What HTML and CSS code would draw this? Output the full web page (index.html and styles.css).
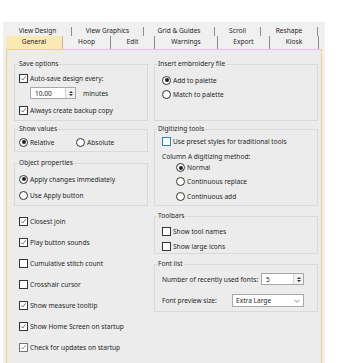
FILE: index.html
```html
<!DOCTYPE html>
<html>
<head>
  <title>Options</title>
  <meta name="viewport" content="width=device-width, initial-scale=1.0">
  <link rel="stylesheet" href="styles.css">
</head>
<body>
  <div class="window">
    <!-- two rows of tabs, the lower one holds the active tab -->
    <div class="tab-row upper">
      <div class="tab t-view-design">View Design</div>
      <div class="tab t-view-graphics">View Graphics</div>
      <div class="tab t-grid">Grid &amp; Guides</div>
      <div class="tab t-scroll">Scroll</div>
      <div class="tab t-reshape">Reshape</div>
    </div>
    <div class="tab-row lower">
      <div class="tab active t-general">General</div>
      <div class="tab t-hoop">Hoop</div>
      <div class="tab t-edit">Edit</div>
      <div class="tab t-warnings">Warnings</div>
      <div class="tab t-export">Export</div>
      <div class="tab t-kiosk">Kiosk</div>
    </div>

    <div class="panel">
      <div class="col left-col">
        <fieldset class="group save-group">
          <legend>Save options</legend>
          <div class="row"><span class="check on"><svg viewBox="0 0 9 9"><polyline points="1.5,4.5 3.4,6.5 7.4,1.6"/></svg></span><span>Auto-save design every:</span></div>
          <div class="row spin-row">
            <div class="spin small-spin"><span class="spin-val">10.00</span><span class="spin-btn"><i class="up"></i><i class="down"></i></span></div>
            <span class="unit">minutes</span>
          </div>
          <div class="row backup-row"><span class="check on"><svg viewBox="0 0 9 9"><polyline points="1.5,4.5 3.4,6.5 7.4,1.6"/></svg></span><span>Always create backup copy</span></div>
        </fieldset>

        <fieldset class="group show-group">
          <legend>Show values</legend>
          <div class="row">
            <span class="radio-item relative"><span class="radio on"></span><span>Relative</span></span>
            <span class="radio-item"><span class="radio"></span><span>Absolute</span></span>
          </div>
        </fieldset>

        <fieldset class="group obj-group">
          <legend>Object properties</legend>
          <div class="row"><span class="radio on"></span><span>Apply changes immediately</span></div>
          <div class="row second"><span class="radio"></span><span>Use Apply button</span></div>
        </fieldset>

        <div class="check-list">
          <div class="row"><span class="check on"><svg viewBox="0 0 9 9"><polyline points="1.5,4.5 3.4,6.5 7.4,1.6"/></svg></span><span>Closest join</span></div>
          <div class="row"><span class="check on"><svg viewBox="0 0 9 9"><polyline points="1.5,4.5 3.4,6.5 7.4,1.6"/></svg></span><span>Play button sounds</span></div>
          <div class="row"><span class="check"></span><span>Cumulative stitch count</span></div>
          <div class="row"><span class="check"></span><span>Crosshair cursor</span></div>
          <div class="row"><span class="check on"><svg viewBox="0 0 9 9"><polyline points="1.5,4.5 3.4,6.5 7.4,1.6"/></svg></span><span>Show measure tooltip</span></div>
          <div class="row"><span class="check on"><svg viewBox="0 0 9 9"><polyline points="1.5,4.5 3.4,6.5 7.4,1.6"/></svg></span><span>Show Home Screen on startup</span></div>
          <div class="row"><span class="check on dim"><svg viewBox="0 0 9 9"><polyline points="1.5,4.5 3.4,6.5 7.4,1.6"/></svg></span><span>Check for updates on startup</span></div>
        </div>
      </div>

      <div class="col right-col">
        <fieldset class="group insert-group">
          <legend>Insert embroidery file</legend>
          <div class="row"><span class="radio on"></span><span>Add to palette</span></div>
          <div class="row second"><span class="radio"></span><span>Match to palette</span></div>
        </fieldset>

        <fieldset class="group digit-group">
          <legend>Digitizing tools</legend>
          <div class="row"><span class="check hover"></span><span>Use preset styles for traditional tools</span></div>
          <div class="row method-label">Column A digitizing method:</div>
          <div class="row indent"><span class="radio on"></span><span>Normal</span></div>
          <div class="row indent replace"><span class="radio"></span><span>Continuous replace</span></div>
          <div class="row indent add"><span class="radio"></span><span>Continuous add</span></div>
        </fieldset>

        <fieldset class="group toolbar-group">
          <legend>Toolbars</legend>
          <div class="row"><span class="check"></span><span>Show tool names</span></div>
          <div class="row second"><span class="check"></span><span>Show large icons</span></div>
        </fieldset>

        <fieldset class="group font-group">
          <legend>Font list</legend>
          <div class="row field-row">
            <span>Number of recently used fonts:</span>
            <div class="spin font-spin"><span class="spin-val">5</span><span class="spin-btn"><i class="up"></i><i class="down"></i></span></div>
          </div>
          <div class="row field-row combo-row">
            <span>Font preview size:</span>
            <div class="combo"><span>Extra Large</span><svg viewBox="0 0 7 4"><polyline points="0.5,0.5 3.5,3.5 6.5,0.5"/></svg></div>
          </div>
        </fieldset>
      </div>
    </div>
  </div>
</body>
</html>
```

FILE: styles.css
```css
body {
  margin: 0;
  background-color: #fff;
  font-family: "Noto Sans", "Open Sans", sans-serif;
  font-size: 6.6px;
  color: #262626;
  overflow: hidden;
}

.window {
  margin: 22px 0 0 3px;
  width: 322px;
  height: 350px;
  background-color: #f0f0f0;
  display: flex;
  flex-direction: column;
  overflow: hidden;
}

/* tabs */
.tab-row {
  display: flex;
}

.tab-row.upper {
  padding: 5px 0 0 1px;
}

.tab-row.lower {
  padding-left: 3px;
}

.tab {
  display: flex;
  align-items: center;
  justify-content: center;
  border-right: 1px solid #8c8c8c;
  box-sizing: border-box;
  line-height: 1;
}

.upper .tab {
  height: 9px;
}

.lower .tab {
  height: 13px;
}

.tab.active {
  background-color: #fce8b2;
  border-right-color: #b9b9b9;
}

.t-view-design { width: 68px; }
.t-view-graphics { width: 72px; }
.t-grid { width: 71px; }
.t-scroll { width: 46px; }
.t-reshape { width: 57px; }

.t-general { width: 57px; }
.t-hoop { width: 48px; }
.t-edit { width: 44px; }
.t-warnings { width: 63px; }
.t-export { width: 52px; }
.t-kiosk { width: 49px; }

/* page body */
.panel {
  flex: 1;
  margin-left: 3px;
  width: 316px;
  box-sizing: border-box;
  border: 1px solid #f1d17c;
  background-color: #ececec;
  padding: 9px 3px 0 7px;
  display: flex;
  gap: 6px;
}

.col {
  display: flex;
  flex-direction: column;
}

.left-col {
  width: 134px;
}

.right-col {
  width: 164px;
}

.group {
  margin: 0;
  border: 1px solid #d9d9d9;
  min-width: 0;
  padding: 0 0 0 4px;
}

.group legend {
  padding: 0 1px;
  margin-left: -1px;
  height: 10px;
  line-height: 10px;
}

.right-col .group {
  padding-left: 7px;
}

.right-col .group legend {
  margin-left: -5px;
}

.row {
  display: flex;
  align-items: center;
  height: 12px;
  gap: 2px;
  white-space: nowrap;
}

/* check boxes and radio buttons */
.check {
  width: 9px;
  height: 9px;
  box-sizing: border-box;
  border: 1px solid #333;
  background-color: #fff;
  flex: none;
  display: flex;
}

.check svg {
  width: 7px;
  height: 7px;
  fill: none;
  stroke: #333;
  stroke-width: 0.9;
}

.check.dim {
  border-color: #777;
}

.check.dim svg {
  stroke: #666;
}

.check.hover {
  border-color: #2f7fd0;
}

.radio {
  width: 9px;
  height: 9px;
  box-sizing: border-box;
  border: 1px solid #333;
  border-radius: 50%;
  background-color: #fff;
  flex: none;
  display: flex;
  align-items: center;
  justify-content: center;
}

.radio.on::after {
  content: "";
  width: 4px;
  height: 4px;
  border-radius: 50%;
  background-color: #222;
}

.radio-item {
  display: flex;
  align-items: center;
  gap: 2px;
}

.radio-item.relative {
  width: 55px;
}

/* spin boxes and combo */
.spin {
  display: flex;
  box-sizing: border-box;
  border: 1px solid #a8a8a8;
  background-color: #fff;
  height: 12px;
}

.spin-val {
  flex: 1;
  display: flex;
  align-items: center;
  padding-left: 4px;
}

.spin-btn {
  width: 9px;
  display: flex;
  flex-direction: column;
  align-items: center;
  justify-content: center;
  gap: 1px;
  border-left: 1px solid #d4d4d4;
  background-color: #f2f2f2;
}

.spin-btn i {
  width: 0;
  height: 0;
  border-left: 2px solid transparent;
  border-right: 2px solid transparent;
}

.spin-btn .up {
  border-bottom: 2px solid #333;
}

.spin-btn .down {
  border-top: 2px solid #333;
}

.small-spin {
  width: 46px;
  margin-left: 11px;
}

.unit {
  margin-left: 5px;
}

.combo {
  width: 72px;
  height: 13px;
  box-sizing: border-box;
  border: 1px solid #a8a8a8;
  background-color: #fff;
  display: flex;
  align-items: center;
  justify-content: space-between;
  padding: 0 3px 0 3px;
}

.combo svg {
  width: 6px;
  height: 4px;
  fill: none;
  stroke: #555;
  stroke-width: 0.8;
}

.font-spin {
  width: 43px;
}

/* vertical rhythm of the left column */
.save-group {
  padding-bottom: 4px;
}

.save-group .row:first-of-type {
  margin-top: 3px;
}

.spin-row {
  margin-top: 3px;
}

.backup-row {
  margin-top: 5px;
}

.show-group {
  margin-top: 3px;
  padding-top: 2px;
  padding-bottom: 3px;
}

.obj-group {
  margin-top: 6px;
  padding-top: 5px;
  padding-bottom: 4px;
}

.obj-group .second {
  margin-top: 4px;
}

.check-list {
  margin-top: 9px;
  padding-left: 5px;
  display: flex;
  flex-direction: column;
  gap: 9px;
}

/* vertical rhythm of the right column */
.insert-group {
  padding-top: 5px;
  padding-bottom: 20px;
}

.insert-group .second {
  margin-top: 2px;
}

.digit-group {
  margin-top: 3px;
  padding-top: 2px;
  padding-bottom: 3px;
}

.digit-group .row {
  height: 11px;
}

.method-label {
  margin-top: 4px;
}

.indent {
  padding-left: 14px;
}

.replace {
  margin-top: 3px;
}

.add {
  margin-top: 4px;
}

.toolbar-group {
  margin-top: 5px;
  padding-top: 5px;
  padding-bottom: 2px;
}

.toolbar-group .row {
  height: 10px;
}

.toolbar-group .second {
  margin-top: 5px;
}

.font-group {
  margin-top: 5px;
  padding-top: 4px;
  padding-right: 13px;
  padding-bottom: 4px;
}

.field-row {
  justify-content: space-between;
}

.combo-row {
  margin-top: 9px;
  height: 13px;
}
```
